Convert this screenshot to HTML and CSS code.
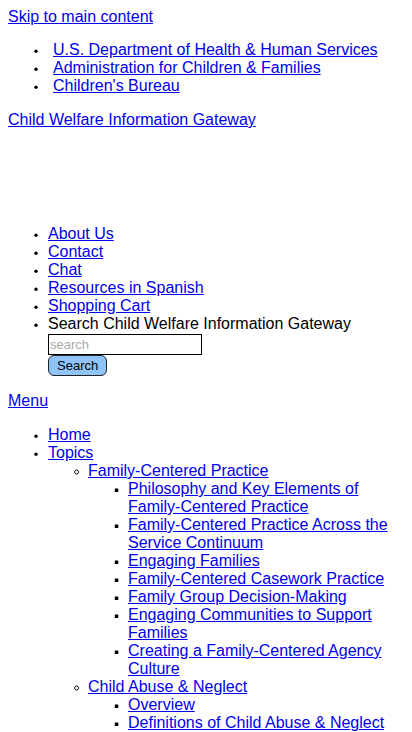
FILE: index.html
```html
<!DOCTYPE html>
<html lang="en">
<head>
<meta charset="utf-8">
<title>Child Welfare Information Gateway</title>
<link rel="stylesheet" href="styles.css">
</head>
<body>
<a href="#main">Skip to main content</a>
<ul class="gov">
  <li><a href="#">U.S. Department of Health &amp; Human Services</a></li>
  <li><a href="#">Administration for Children &amp; Families</a></li>
  <li><a href="#">Children's Bureau</a></li>
</ul>
<p class="site"><a href="#">Child Welfare Information Gateway</a></p>
<div class="logo-space"></div>
<ul class="util">
  <li><a href="#">About Us</a></li>
  <li><a href="#">Contact</a></li>
  <li><a href="#">Chat</a></li>
  <li><a href="#">Resources in Spanish</a></li>
  <li><a href="#">Shopping Cart</a></li>
  <li>Search Child Welfare Information Gateway
    <form class="search">
      <input class="search-input" type="text" placeholder="search">
      <button class="search-btn" type="button">Search</button>
    </form>
  </li>
</ul>
<p class="menu"><a href="#">Menu</a></p>
<ul class="nav">
  <li><a href="#">Home</a></li>
  <li><a href="#">Topics</a>
    <ul>
      <li><a href="#">Family-Centered Practice</a>
        <ul>
          <li><a href="#">Philosophy and Key Elements of Family-Centered Practice</a></li>
          <li><a href="#">Family-Centered Practice Across the Service Continuum</a></li>
          <li><a href="#">Engaging Families</a></li>
          <li><a href="#">Family-Centered Casework Practice</a></li>
          <li><a href="#">Family Group Decision-Making</a></li>
          <li><a href="#">Engaging Communities to Support Families</a></li>
          <li><a href="#">Creating a Family-Centered Agency Culture</a></li>
        </ul>
      </li>
      <li><a href="#">Child Abuse &amp; Neglect</a>
        <ul>
          <li><a href="#">Overview</a></li>
          <li><a href="#">Definitions of Child Abuse &amp; Neglect</a></li>
        </ul>
      </li>
    </ul>
  </li>
</ul>
</body>
</html>
```
FILE: styles.css
```css
html, body {
  font-family: "Liberation Sans", Arial, sans-serif;
  font-size: 16px;
  line-height: 18px;
  color: #000;
  background: #fff;
}
body {
  margin: 8px;
}
a {
  color: #0000ee;
}
ul {
  margin: 16px 0;
  padding-left: 40px;
  list-style-image: url("data:image/svg+xml,%3Csvg xmlns='http://www.w3.org/2000/svg' width='10' height='10'%3E%3Ccircle cx='5' cy='6.3' r='1.7' fill='%23000'/%3E%3C/svg%3E");
}
ul ul {
  margin: 0;
  list-style-image: url("data:image/svg+xml,%3Csvg xmlns='http://www.w3.org/2000/svg' width='10' height='10'%3E%3Ccircle cx='5.6' cy='6' r='2' fill='none' stroke='%23000' stroke-width='0.9'/%3E%3C/svg%3E");
}
ul ul ul {
  list-style-image: url("data:image/svg+xml,%3Csvg xmlns='http://www.w3.org/2000/svg' width='10' height='10'%3E%3Crect x='3.8' y='4.5' width='3.5' height='3.5' fill='%23000'/%3E%3C/svg%3E");
}
.gov {
  margin-top: 15px;
}
.gov a {
  margin-left: 5px;
}
.site {
  margin: 16px 0;
}
.logo-space {
  height: 64px;
}
.search {
  margin: 0;
}
.search-input {
  display: block;
  box-sizing: border-box;
  width: 154px;
  height: 21px;
  margin: 1px 0 0;
  padding: 1px 1px;
  border: 1px solid #000;
  font-family: "Liberation Sans", Arial, sans-serif;
  font-size: 13px;
}
.search-input::placeholder {
  color: #a9a9a9;
}
.search-btn {
  display: block;
  box-sizing: border-box;
  height: 21px;
  margin: 0;
  padding: 1px 8px;
  border: 1px solid #222;
  border-radius: 6px;
  background: #8ec4f7;
  color: #000;
  font-family: "Liberation Sans", Arial, sans-serif;
  font-size: 13px;
}
.menu {
  margin: 16px 0;
}
```
